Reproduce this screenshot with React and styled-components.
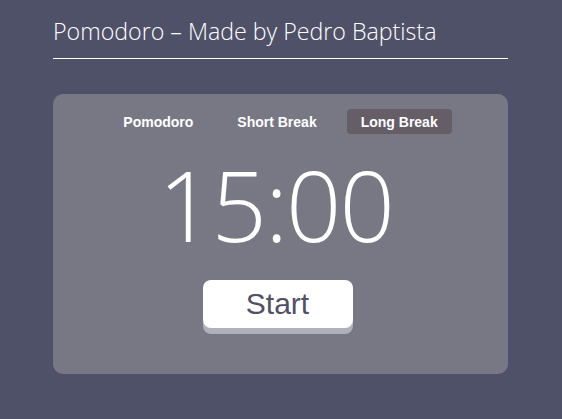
import React from "react";
import styled, { createGlobalStyle } from "styled-components";

const Global = createGlobalStyle`
  html, body { margin: 0; padding: 0; background: #4f5168; }
  body { font-family: "Liberation Sans", Arial, sans-serif; }
`;

const Page = styled.div`
  width: 455px;
  margin: 0 0 0 53px;
  padding-top: 17px;
`;

const Header = styled.header`
  border-bottom: 1px solid #ffffff;
  padding-bottom: 12px;
`;

const Title = styled.h1`
  margin: 0;
  font-family: "Open Sans", sans-serif;
  font-weight: 300;
  font-size: 23.2px;
  line-height: 29px;
  color: #ffffff;
`;

const Card = styled.main`
  margin-top: 35px;
  height: 280px;
  box-sizing: border-box;
  background: #787885;
  border-radius: 10px;
  display: flex;
  flex-direction: column;
  align-items: center;
  padding-top: 15px;
`;

const Tabs = styled.nav`
  display: flex;
  gap: 16px;
`;

const Tab = styled.button`
  border: none;
  background: ${(p) => (p.$active ? "#665e67" : "transparent")};
  color: #ffffff;
  font-family: "Liberation Sans", Arial, sans-serif;
  font-weight: 700;
  font-size: 14px;
  height: 25px;
  padding: 0 14px;
  border-radius: 4px;
  cursor: pointer;
`;

const Time = styled.div`
  font-family: "Open Sans", sans-serif;
  font-weight: 300;
  font-size: 97px;
  line-height: 1;
  color: #ffffff;
  margin-top: 22px;
  margin-right: 10px;
  letter-spacing: -2px;
`;

const StartButton = styled.button`
  margin-top: 27px;
  margin-right: 6px;
  width: 150px;
  height: 48px;
  border: none;
  border-radius: 8px;
  background: #ffffff;
  box-shadow: 0 6px 0 #b0b0b8;
  color: #4f5168;
  font-family: "Liberation Sans", Arial, sans-serif;
  font-size: 30px;
  cursor: pointer;
`;

export default function App() {
  return (
    <>
      <Global />
      <Page>
        <Header>
          <Title>Pomodoro – Made by Pedro Baptista</Title>
        </Header>
        <Card>
          <Tabs>
            <Tab>Pomodoro</Tab>
            <Tab>Short Break</Tab>
            <Tab $active>Long Break</Tab>
          </Tabs>
          <Time>15:00</Time>
          <StartButton>Start</StartButton>
        </Card>
      </Page>
    </>
  );
}
